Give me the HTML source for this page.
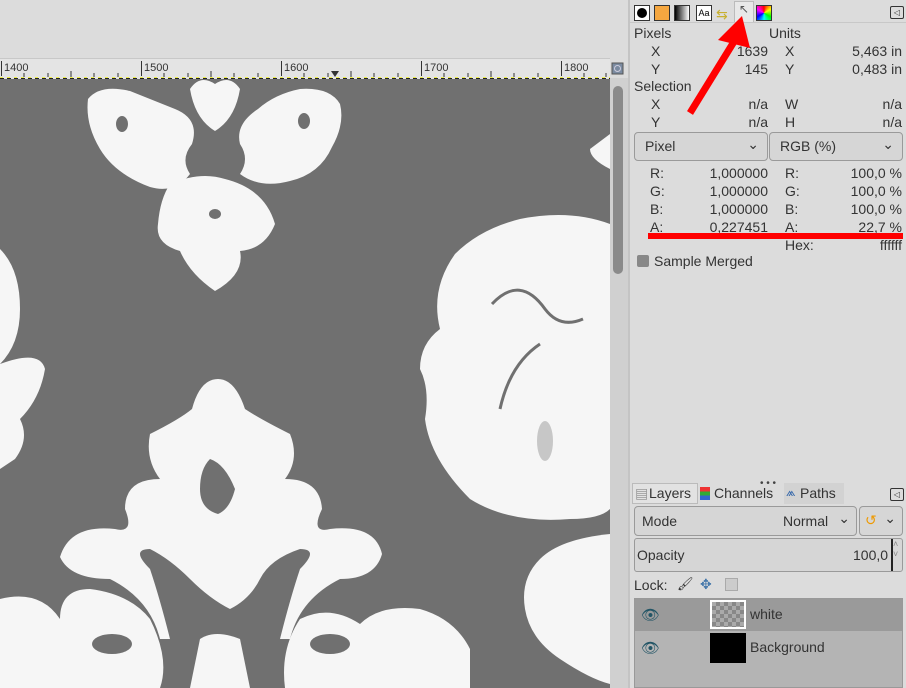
<!DOCTYPE html>
<html><head><style>
body{margin:0;width:906px;height:688px;overflow:hidden;background:#dcdcdc;font-family:"Liberation Sans","DejaVu Sans",sans-serif;font-size:14px;color:#333;position:relative}
.a{position:absolute}
.r{text-align:right}
.btn{position:absolute;border:1px solid #9a9a9a;border-radius:4px;background:#d6d6d6;box-sizing:border-box}
</style></head><body>
<!-- ruler -->
<div class="a" style="left:0;top:58px;width:610px;height:20px;background:#e4e4e4;border-top:1px solid #c8c8c8"></div>
<svg class="a" style="left:0;top:58px" width="630" height="22">
<g stroke="#333" stroke-width="1">
<line x1="1.5" y1="3" x2="1.5" y2="18"/><line x1="141.5" y1="3" x2="141.5" y2="18"/><line x1="281.5" y1="3" x2="281.5" y2="18"/><line x1="421.5" y1="3" x2="421.5" y2="18"/><line x1="561.5" y1="3" x2="561.5" y2="18"/>
</g>
<g stroke="#333">
<path d="M24 15v4M48 15v4M71 13v6M94 15v4M118 15v4M164 15v4M188 15v4M211 13v6M234 15v4M258 15v4M304 15v4M328 15v4M351 13v6M374 15v4M398 15v4M444 15v4M468 15v4M491 13v6M514 15v4M538 15v4M584 15v4M606 15v4"/>
</g>
<g font-size="11" fill="#333" font-family="Liberation Sans"><text x="4" y="13">1400</text><text x="144" y="13">1500</text><text x="284" y="13">1600</text><text x="424" y="13">1700</text><text x="564" y="13">1800</text></g>
<path d="M331 13h8l-4 6z" fill="#333"/>
<line x1="0" y1="20.5" x2="610" y2="20.5" stroke="#222" stroke-dasharray="4 3"/>
<line x1="0" y1="19.5" x2="610" y2="19.5" stroke="#ee4" stroke-dasharray="3 4"/>
<rect x="612" y="5" width="11" height="11" fill="#7a8aa0" stroke="#555"/><circle cx="617.5" cy="10.5" r="3" fill="none" stroke="#ccd"/>
</svg>
<!-- canvas -->
<svg class="a" style="left:0;top:79px" width="610" height="609">
<rect width="610" height="609" fill="#707070"/>
<g fill="#f6f6f6">
<!-- top motif -->
<path d="M88 20 Q100 5 130 12 Q150 20 175 30 Q200 40 192 65 Q180 80 190 95 Q175 115 150 108 Q115 95 100 70 Q85 45 88 20Z"/>
<path d="M340 25 Q330 8 300 10 Q275 15 258 30 Q235 45 240 65 Q250 80 240 95 Q260 110 290 102 Q320 95 332 68 Q345 45 340 25Z"/>
<path d="M190 10 Q200 -5 215 5 Q230 -5 240 10 Q235 40 215 52 Q195 40 190 10Z"/>
<path d="M170 105 Q200 92 225 100 Q265 110 275 145 Q265 170 240 172 Q245 195 215 212 Q190 195 180 172 Q155 165 158 145 Q160 120 170 105Z"/>
<!-- left edge -->
<path d="M0 170 Q20 190 20 230 Q20 265 0 285Z"/>
<path d="M0 285 Q40 270 45 290 Q40 320 20 340 Q30 360 15 380 L0 390Z"/>
<!-- right motif -->
<path d="M610 55 L610 90 Q590 80 590 70Z"/>
<path d="M610 145 Q570 130 520 140 Q480 150 455 175 Q430 210 440 250 Q420 265 420 290 Q430 310 425 340 Q430 380 470 420 Q510 445 570 440 Q600 440 610 430Z"/>
<path d="M610 455 Q560 460 540 480 Q520 500 525 530 Q530 560 560 580 Q590 600 610 605Z"/>
<!-- bottom center -->
<path d="M218 300 Q235 300 245 330 Q260 340 290 355 Q300 380 285 400 Q320 400 322 430 Q310 455 330 450 Q375 445 382 475 Q375 500 340 500 Q300 520 290 560 L280 560 Q290 520 300 490 Q320 470 300 470 Q270 480 260 500 Q250 520 230 530 Q210 520 190 500 Q170 480 150 470 Q130 470 150 490 Q160 520 170 560 L160 560 Q150 520 110 500 Q70 500 60 478 Q70 445 115 450 Q135 455 125 430 Q125 400 160 400 Q145 380 150 355 Q180 340 192 330 Q200 300 218 300Z"/>
<path d="M0 520 Q40 510 60 540 Q60 510 90 510 Q130 515 150 540 Q170 580 160 609 L0 609Z"/>
<path d="M470 609 L470 570 Q455 540 420 530 Q380 525 360 545 Q330 525 300 540 Q280 570 285 609Z"/>
<path d="M200 560 Q215 550 240 560 L250 609 L190 609Z"/>
</g>
<g fill="#707070">
<path d="M210 380 Q225 385 235 410 Q230 430 218 435 Q200 430 200 410 Q200 390 210 380Z"/>
<ellipse cx="122" cy="45" rx="6" ry="8"/><ellipse cx="304" cy="42" rx="6" ry="8"/><ellipse cx="215" cy="135" rx="6" ry="5"/>
<path d="M492 225 Q520 195 545 230 Q560 250 583 240" stroke="#707070" stroke-width="3" fill="none"/>
<path d="M540 265 Q510 285 500 330" stroke="#707070" stroke-width="3" fill="none"/>
<ellipse cx="112" cy="565" rx="20" ry="10"/><ellipse cx="330" cy="565" rx="20" ry="10"/>
</g>
<g fill="#a8a8a8" opacity=".6"><ellipse cx="545" cy="362" rx="8" ry="20"/></g>
</svg>
<!-- scrollbar -->
<div class="a" style="left:610px;top:78px;width:18px;height:610px;background:#d0d0d0"></div>
<div class="a" style="left:613px;top:86px;width:10px;height:188px;background:#8a8a8a;border-radius:5px"></div>
<div class="a" style="left:628px;top:0;width:2px;height:688px;background:#c4c4c4"></div>
<!-- toolbar icons -->
<div class="a" style="left:634px;top:5px;width:16px;height:16px;background:#fff;border:1px solid #333;box-sizing:border-box"><div style="margin:2px;width:10px;height:10px;border-radius:50%;background:#000"></div></div>
<div class="a" style="left:654px;top:5px;width:16px;height:16px;border:1px solid #333;box-sizing:border-box;background:#f5a740"></div>
<div class="a" style="left:674px;top:5px;width:16px;height:16px;border:1px solid #333;box-sizing:border-box;background:linear-gradient(90deg,#000,#fff)"></div>
<div class="a" style="left:696px;top:5px;width:16px;height:16px;border:1px solid #333;box-sizing:border-box;background:#fff;font-size:9px;line-height:14px;text-align:center;color:#000">Aa</div>
<div class="a" style="left:716px;top:6px;color:#c8b030;font-size:14px">⇆</div>
<div class="a" style="left:734px;top:1px;width:20px;height:22px;background:#e8e8e8;border:1px solid #bbb;box-sizing:border-box;font-size:12px;text-align:center;color:#555">↖</div>
<div class="a" style="left:756px;top:5px;width:16px;height:16px;border:1px solid #333;box-sizing:border-box;background:conic-gradient(#f00,#ff0,#0f0,#0ff,#00f,#f0f,#f00)"></div>
<div class="a" style="left:890px;top:6px;width:12px;height:11px;border:1px solid #333;border-radius:2px;font-size:8px;line-height:11px;text-align:center">◁</div>
<div class="a" style="left:630px;top:22px;width:276px;height:1px;background:#c8c8c8"></div>
<!-- pointer info -->
<div class="a" style="left:634px;top:25px">Pixels</div><div class="a" style="left:769px;top:25px">Units</div>
<div class="a" style="left:651px;top:43px">X</div><div class="a r" style="left:690px;top:43px;width:78px">1639</div>
<div class="a" style="left:785px;top:43px">X</div><div class="a r" style="left:800px;top:43px;width:102px">5,463 in</div>
<div class="a" style="left:651px;top:61px">Y</div><div class="a r" style="left:690px;top:61px;width:78px">145</div>
<div class="a" style="left:785px;top:61px">Y</div><div class="a r" style="left:800px;top:61px;width:102px">0,483 in</div>
<div class="a" style="left:634px;top:78px">Selection</div>
<div class="a" style="left:651px;top:96px">X</div><div class="a r" style="left:690px;top:96px;width:78px">n/a</div>
<div class="a" style="left:785px;top:96px">W</div><div class="a r" style="left:800px;top:96px;width:102px">n/a</div>
<div class="a" style="left:651px;top:114px">Y</div><div class="a r" style="left:690px;top:114px;width:78px">n/a</div>
<div class="a" style="left:785px;top:114px">H</div><div class="a r" style="left:800px;top:114px;width:102px">n/a</div>
<div class="btn" style="left:634px;top:132px;width:134px;height:29px"><span class="a" style="left:10px;top:5px">Pixel</span><span class="a" style="right:8px;top:3px">⌄</span></div>
<div class="btn" style="left:769px;top:132px;width:134px;height:29px"><span class="a" style="left:10px;top:5px">RGB (%)</span><span class="a" style="right:8px;top:3px">⌄</span></div>
<div class="a" style="left:650px;top:164px;line-height:18px">R:<br>G:<br>B:<br>A:</div>
<div class="a r" style="left:680px;top:164px;width:88px;line-height:18px">1,000000<br>1,000000<br>1,000000<br>0,227451</div>
<div class="a" style="left:785px;top:164px;line-height:18px">R:<br>G:<br>B:<br>A:<br>Hex:</div>
<div class="a r" style="left:800px;top:164px;width:102px;line-height:18px">100,0 %<br>100,0 %<br>100,0 %<br>22,7 %<br>ffffff</div>
<div class="a" style="left:648px;top:233px;width:255px;height:6px;background:#f00"></div>
<div class="a" style="left:637px;top:255px;width:12px;height:12px;background:#888;border-radius:2px"></div>
<div class="a" style="left:654px;top:253px">Sample Merged</div>
<!-- red arrow -->
<svg class="a" style="left:680px;top:10px" width="80" height="110"><path d="M10 103 L55 30" stroke="#f00" stroke-width="7" fill="none"/><path d="M38 30 L62 6 L70 38 Z" fill="#f00"/></svg>
<!-- separator -->
<div class="a" style="left:760px;top:478px;font-size:10px;color:#444">• • •</div>
<!-- tabs -->
<div class="a" style="left:632px;top:483px;width:66px;height:21px;background:#e2e2e2;border:1px solid #bbb;box-sizing:border-box"></div>
<div class="a" style="left:635px;top:485px;color:#999">▤</div><div class="a" style="left:649px;top:485px">Layers</div>
<div class="a" style="left:700px;top:487px;width:10px;height:13px;background:linear-gradient(#e33 33%,#3a3 33% 66%,#36c 66%)"></div><div class="a" style="left:714px;top:485px">Channels</div>
<div class="a" style="left:784px;top:483px;width:60px;height:21px;background:#d2d2d2"></div>
<div class="a" style="left:786px;top:485px;color:#36a;font-size:12px">⩕</div><div class="a" style="left:800px;top:485px">Paths</div>
<div class="a" style="left:890px;top:488px;width:12px;height:11px;border:1px solid #333;border-radius:2px;font-size:8px;line-height:11px;text-align:center">◁</div>
<div class="btn" style="left:634px;top:506px;width:223px;height:30px"><span class="a" style="left:7px;top:6px">Mode</span><span class="a" style="left:148px;top:6px">Normal</span><span class="a" style="right:6px;top:3px">⌄</span></div>
<div class="btn" style="left:859px;top:506px;width:44px;height:30px"><span class="a" style="left:5px;top:5px;color:#e90">↺</span><span class="a" style="right:6px;top:3px">⌄</span></div>
<div class="btn" style="left:634px;top:538px;width:269px;height:34px;border-radius:3px"><span class="a" style="left:2px;top:8px">Opacity</span><span class="a" style="left:218px;top:8px">100,0</span><div class="a" style="left:256px;top:0;width:2px;height:32px;background:#222"></div><span class="a" style="left:258px;top:0;font-size:9px;color:#888">˄<br>˅</span></div>
<div class="a" style="left:634px;top:577px">Lock:</div>
<div class="a" style="left:677px;top:576px;font-size:13px">🖌</div>
<div class="a" style="left:700px;top:576px;color:#47a">✥</div>
<div class="a" style="left:725px;top:578px;width:11px;height:11px;border:1px solid #aaa;background:#ccc"></div>
<!-- layers list -->
<div class="a" style="left:634px;top:598px;width:269px;height:90px;background:#b4b4b4;border:1px solid #999;box-sizing:border-box"></div>
<div class="a" style="left:635px;top:599px;width:267px;height:32px;background:#9a9a9a"></div>
<div class="a" style="left:641px;top:606px;color:#256;font-size:15px">👁</div>
<div class="a" style="left:710px;top:600px;width:36px;height:29px;background:repeating-conic-gradient(#888 0 25%,#aaa 0 50%) 0 0/8px 8px;border:2px solid #fff;box-sizing:border-box"></div>
<div class="a" style="left:750px;top:606px">white</div>
<div class="a" style="left:641px;top:639px;color:#256;font-size:15px">👁</div>
<div class="a" style="left:710px;top:633px;width:36px;height:30px;background:#000"></div>
<div class="a" style="left:750px;top:639px">Background</div>
</body></html>
